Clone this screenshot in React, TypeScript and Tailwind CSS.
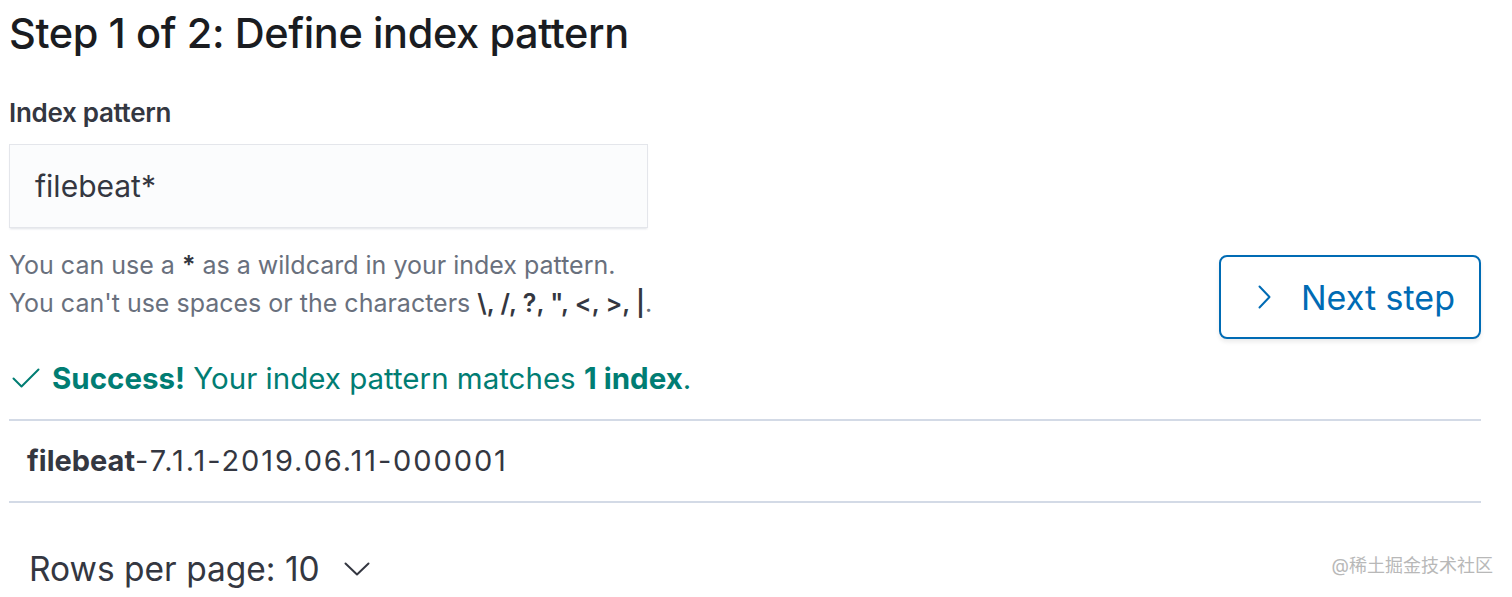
export default function App() {
  const font = { fontFamily: "Inter, 'Noto Sans CJK SC', sans-serif" };

  return (
    <main className="relative w-[1512px] h-[597px] bg-white text-[#1a1c21] overflow-hidden" style={font}>
      <div className="pl-[9px] pr-[31px]">
        <h1 className="pt-[9px] text-[41.5px] leading-[48px] font-medium tracking-[-0.4px]">
          Step 1 of 2: Define index pattern
        </h1>

        <div className="mt-[42px] flex items-start justify-between">
          <div className="w-[660px]">
            <label className="block text-[26px] leading-[28px] font-semibold text-[#343741] tracking-[-0.3px]">
              Index pattern
            </label>
            <div className="mt-[17px] h-[84px] w-[639px] flex items-center px-[25px] bg-[#fbfcfd] border border-[#e4e6eb] shadow-[0_2px_2px_-1px_rgba(152,162,179,0.3)] text-[30px] text-[#343741]">
              filebeat*
            </div>
            <div className="mt-[18px] text-[25px] leading-[38px] text-[#69707d] whitespace-nowrap">
              <p>
                You can use a <strong className="font-semibold text-[#343741]">*</strong> as a wildcard in your index pattern.
              </p>
              <p>
                You can't use spaces or the characters{" "}
                <strong className="font-semibold text-[#343741]">\, /, ?, ", &lt;, &gt;, |</strong>.
              </p>
            </div>
          </div>

          <button className="mt-[156px] h-[84px] w-[262px] flex items-center gap-[30px] pl-[37px] rounded-[8px] border-2 border-[#006bb4] bg-white text-[#006bb4] text-[34px] shadow-[0_3px_4px_rgba(0,0,0,0.08)]">
            <svg width="13" height="24" viewBox="0 0 13 24" fill="none" stroke="currentColor" strokeWidth="2" strokeLinecap="round" strokeLinejoin="round">
              <path d="M1.5 1.5 11.5 12 1.5 22.5" />
            </svg>
            <span>Next step</span>
          </button>
        </div>

        <div className="mt-[23px] flex items-center gap-[12px] text-[#017d73] text-[29.5px] leading-[32px]">
          <svg width="28" height="20" viewBox="0 0 28 20" fill="none" stroke="currentColor" strokeWidth="2" strokeLinecap="round" strokeLinejoin="round" className="ml-[3px]">
            <path d="M1.5 10.5 9.5 18.5 26.5 1.5" />
          </svg>
          <span>
            <strong className="font-bold">Success!</strong> Your index pattern matches{" "}
            <strong className="font-bold">1 index</strong>.
          </span>
        </div>

        <div className="mt-[25px] border-t-2 border-[#d3dae6]" />
        <div className="h-[80px] flex items-center pl-[18px] text-[29px] text-[#343741]">
          <span>
            <strong className="font-bold">filebeat</strong>
            <span className="tracking-[1.9px]">-7.1.1-2019.06.11-000001</span>
          </span>
        </div>
        <div className="border-t-2 border-[#d3dae6]" />

        <div className="mt-[46px] flex items-center gap-[24px] pl-[20px] text-[33.5px] leading-[40px] text-[#343741]">
          <span>Rows per page: 10</span>
          <svg width="26" height="14" viewBox="0 0 26 14" fill="none" stroke="currentColor" strokeWidth="2" strokeLinecap="round" strokeLinejoin="round">
            <path d="M1.5 1.5 13 12.5 24.5 1.5" />
          </svg>
        </div>
      </div>

      <div className="absolute right-[19px] bottom-[18px] text-[18px] text-[#b8b8b8]">
        @稀土掘金技术社区
      </div>
    </main>
  );
}
